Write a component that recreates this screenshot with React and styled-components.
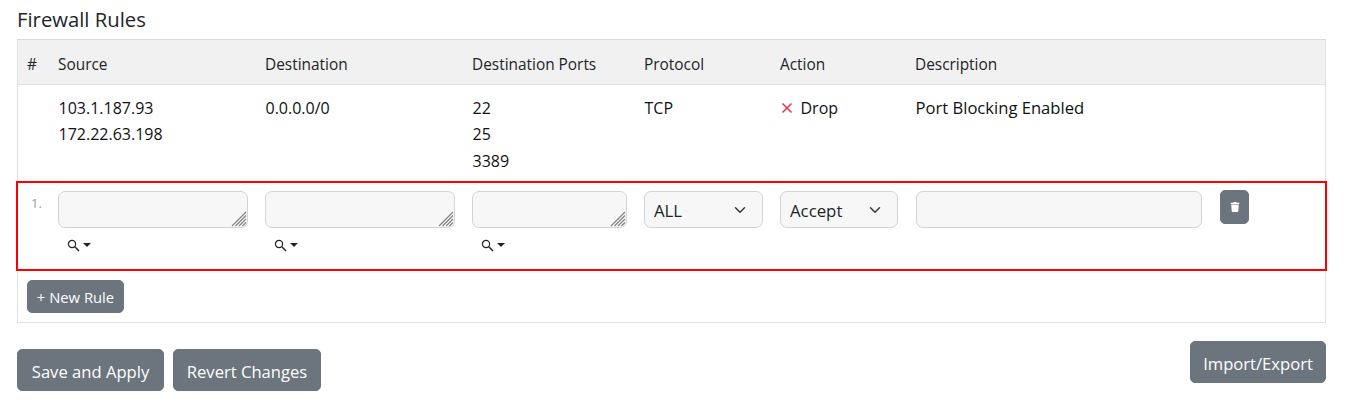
import React from "react";
import styled, { createGlobalStyle } from "styled-components";
import { FaTrash } from "react-icons/fa";

const chevron = `url("data:image/svg+xml,%3csvg xmlns='http://www.w3.org/2000/svg' viewBox='0 0 16 16'%3e%3cpath fill='none' stroke='%23343a40' stroke-linecap='round' stroke-linejoin='round' stroke-width='2' d='M2 5l6 6 6-6'/%3e%3c/svg%3e")`;

const hatch = `url("data:image/svg+xml,%3csvg xmlns='http://www.w3.org/2000/svg' width='16' height='16'%3e%3cpath fill='none' stroke='%23808080' stroke-width='1.1' d='M1 15L15 1M4.500 15L15 4.500M8 15L15 8M11.500 15L15 11.500'/%3e%3c/svg%3e")`;

const GlobalStyle = createGlobalStyle`
  * { box-sizing: border-box; }
  html, body { margin: 0; background: #fff; }
  body {
    font-family: "Open Sans", "Noto Sans", sans-serif;
    font-size: 16px;
    line-height: 26.4px;
    color: #212529;
  }
`;

const Page = styled.div`
  width: 1346px;
  height: 410px;
  padding: 6px 20px 0 17px;
  overflow: hidden;
`;

const Title = styled.h2`
  margin: 0 0 6px;
  font-size: 20.300px;
  font-weight: 400;
  line-height: 27px;
  color: #212529;
`;

const Card = styled.div`
  width: 1309px;
  height: 284px;
  border: 1px solid #dee2e6;
  border-top-color: #d6d9de;
`;

const Row = styled.div`
  display: grid;
  grid-template-columns: 31px 207px 207px 172px 136px 135px 305px 1fr;
  & > * { padding: 0 9px; min-width: 0; }
`;

const HeadRow = styled(Row)`
  height: 45px;
  align-items: center;
  background: #f1f1f1;
  border-bottom: 1px solid #dee2e6;
  padding-top: 7px;
  font-size: 15.400px;
  color: #212529;
`;

const DataRow = styled(Row)`
  height: 96px;
  padding-top: 10px;
  color: #111;
  & > * { padding-left: 9.5px; }
`;

const Line = styled.div`
  height: 26.4px;
`;

const ActionCell = styled.div`
  display: flex;
  align-items: flex-start;
  gap: 8px;
`;

const DescriptionCell = styled.div`
  font-size: 16.600px;
`;

const DropIcon = styled.svg`
  width: 12px;
  height: 12px;
  margin-top: 7px;
  stroke: #e0364f;
  stroke-width: 1.5;
  fill: none;
`;

const EditRow = styled(Row)`
  width: 1311px;
  height: 90px;
  margin-left: -2px;
  padding: 8px 0 0;
  border: 2px solid #f00;
  & > * { padding: 0 8px 0 9px; }
`;

const RowNumber = styled.div`
  && { padding: 0 0 0 13px; }
  font-size: 13px;
  line-height: 24px;
  color: #a39a90;
`;

const FieldCell = styled.div`
  display: flex;
  flex-direction: column;
  align-items: flex-start;
`;

const TextBox = styled.textarea`
  display: block;
  width: 100%;
  height: 37px;
  margin: 0;
  padding: 4px 9px;
  resize: none;
  background: #f7f7f7 ${hatch} no-repeat right 0 bottom 0;
  border: 1px solid #ced4da;
  border-radius: 7px;
  font: inherit;
  outline: none;
`;

const SearchToggle = styled.div`
  display: flex;
  align-items: center;
  gap: 3px;
  height: 18px;
  margin: 8px 0 0 9px;
`;

const Caret = styled.span`
  width: 0;
  height: 0;
  border-left: 4px solid transparent;
  border-right: 4px solid transparent;
  border-top: 4px solid #212529;
`;

const Select = styled.select`
  display: block;
  width: 100%;
  height: 37px;
  padding: 5px 30px 2px 9px;
  appearance: none;
  background: #f7f7f7 ${chevron} no-repeat right 14px center / 16px 12px;
  border: 1px solid #ced4da;
  border-radius: 7px;
  font: inherit;
  font-size: 16.800px;
  color: #212529;
  outline: none;
`;

const TextInput = styled.input`
  display: block;
  width: 286px;
  height: 37px;
  margin-left: 1px;
  background: #f7f7f7;
  border: 1px solid #ced4da;
  border-radius: 7px;
  outline: none;
`;

const Button = styled.button`
  display: inline-flex;
  align-items: center;
  justify-content: center;
  padding: 0;
  background: #6c757d;
  border: 1px solid #6c757d;
  border-radius: 5px;
  color: #fff;
  font: inherit;
  white-space: nowrap;
`;

const TrashButton = styled(Button)`
  width: 29px;
  height: 34px;
  margin-top: -1px;
  font-size: 10px;
`;

const AddBar = styled.div`
  padding: 9px 9px 0;
`;

const NewRuleButton = styled(Button)`
  width: 97px;
  height: 33px;
  padding-top: 2px;
  font-size: 14.800px;
`;

const Footer = styled.div`
  display: flex;
  align-items: flex-start;
  justify-content: space-between;
  width: 1309px;
  padding-top: 18px;
`;

const FooterLeft = styled.div`
  display: flex;
  gap: 9px;
  padding-top: 8px;
`;

const BigButton = styled(Button)`
  width: ${(p) => p.$w}px;
  height: 42px;
  padding-top: 4px;
  font-size: 16.600px;
`;

const columns = ["#", "Source", "Destination", "Destination Ports", "Protocol", "Action", "Description", ""];

const SearchIcon = () => (
  <svg width="13" height="13" viewBox="0 0 13 13" fill="none" stroke="#212529" strokeWidth="1.2">
    <circle cx="5" cy="5" r="3.6" />
    <path d="M7.8 7.8L12 12" strokeWidth="1.5" />
  </svg>
);

const SourceField = () => (
  <FieldCell>
    <TextBox />
    <SearchToggle>
      <SearchIcon />
      <Caret />
    </SearchToggle>
  </FieldCell>
);

export default function App() {
  return (
    <Page>
      <GlobalStyle />
      <Title>Firewall Rules</Title>
      <Card>
        <HeadRow>
          {columns.map((c, i) => (
            <div key={i}>{c}</div>
          ))}
        </HeadRow>
        <DataRow>
          <div />
          <div>
            <Line>103.1.187.93</Line>
            <Line>172.22.63.198</Line>
          </div>
          <div>0.0.0.0/0</div>
          <div>
            <Line>22</Line>
            <Line>25</Line>
            <Line>3389</Line>
          </div>
          <div>TCP</div>
          <ActionCell>
            <DropIcon viewBox="0 0 12 12">
              <path d="M1.5 1.5l9 9M10.5 1.5l-9 9" />
            </DropIcon>
            Drop
          </ActionCell>
          <DescriptionCell>Port Blocking Enabled</DescriptionCell>
          <div />
        </DataRow>
        <EditRow>
          <RowNumber>1.</RowNumber>
          <SourceField />
          <SourceField />
          <SourceField />
          <div>
            <Select defaultValue="ALL">
              <option>ALL</option>
              <option>TCP</option>
              <option>UDP</option>
            </Select>
          </div>
          <div>
            <Select defaultValue="Accept">
              <option>Accept</option>
              <option>Drop</option>
            </Select>
          </div>
          <div>
            <TextInput />
          </div>
          <div>
            <TrashButton>
              <FaTrash />
            </TrashButton>
          </div>
        </EditRow>
        <AddBar>
          <NewRuleButton>+ New Rule</NewRuleButton>
        </AddBar>
      </Card>
      <Footer>
        <FooterLeft>
          <BigButton $w={147}>Save and Apply</BigButton>
          <BigButton $w={148}>Revert Changes</BigButton>
        </FooterLeft>
        <BigButton $w={136}>Import/Export</BigButton>
      </Footer>
    </Page>
  );
}
